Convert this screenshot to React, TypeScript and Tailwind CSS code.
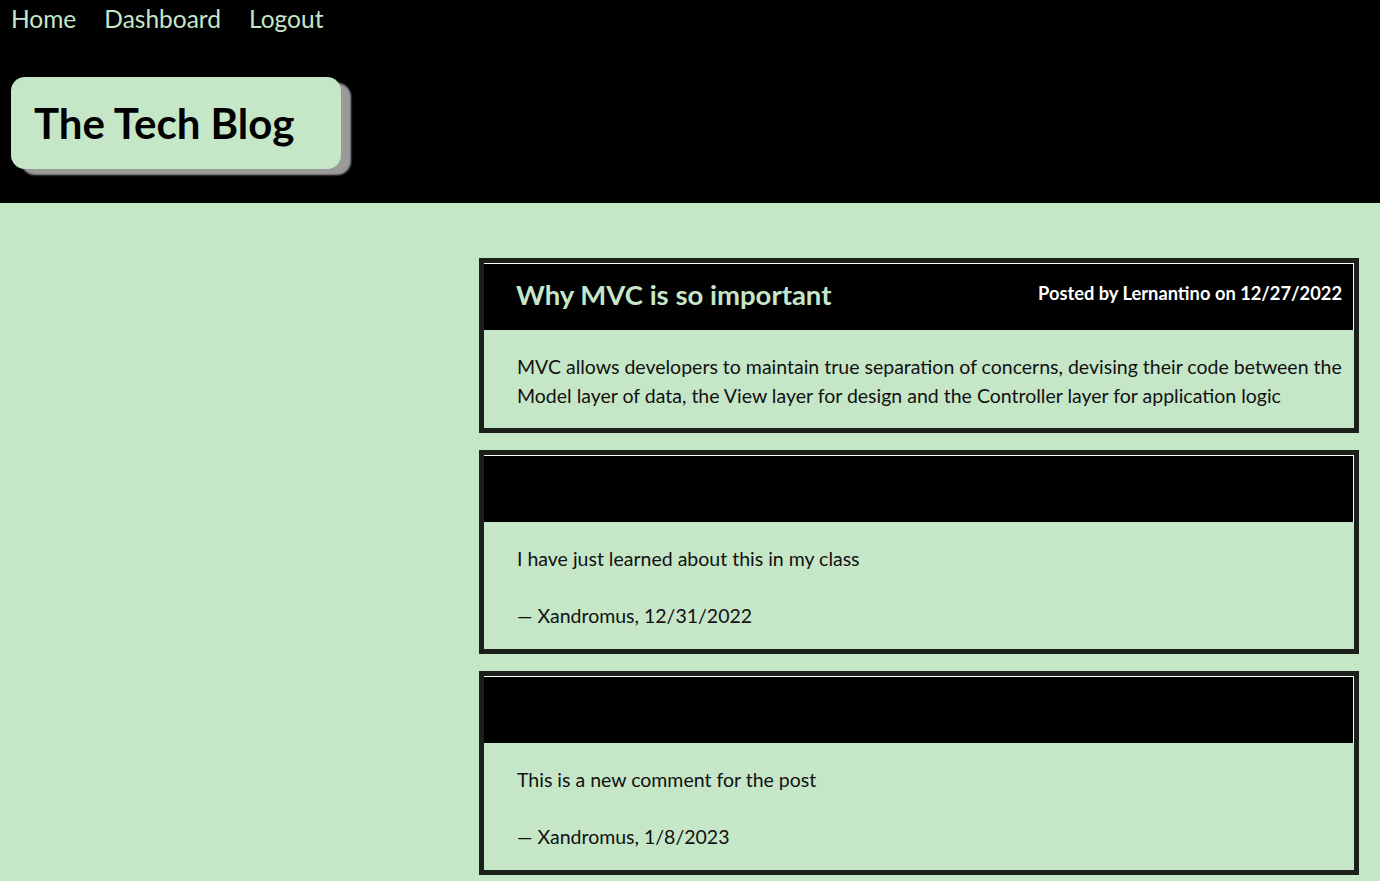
import React from "react";

const font = { fontFamily: '"Lato", "Noto Sans", sans-serif' };

function Card({
  title,
  meta,
  pb,
  children,
}: {
  title?: string;
  meta?: string;
  pb: string;
  children: React.ReactNode;
}) {
  return (
    <div className="w-[880px] border-[5px] border-[#1b201b] bg-[#c6e6c8]">
      <div className="h-[67px] bg-black border-t border-r border-white flex items-center justify-between pl-[32px] pr-[11px]">
        <h2 className="text-[27.5px] font-bold text-[#c6e6c8] leading-none -mt-[4px]">{title}</h2>
        <div className="text-[18.3px] font-bold text-white leading-none -mt-[8px]">{meta}</div>
      </div>
      <div className={`pl-[33px] pr-[10px] pt-[22px] ${pb} text-[19.5px] leading-[29px] text-[#111]`}>
        {children}
      </div>
    </div>
  );
}

export default function App() {
  return (
    <div className="min-h-[881px] bg-[#c6e6c8]" style={font}>
      <header className="bg-black h-[203px] px-[11px] flex flex-col">
        <nav className="flex gap-[28px] text-[24.5px] text-[#c6e6c8] leading-none pt-[7px]">
          <a>Home</a>
          <a>Dashboard</a>
          <a>Logout</a>
        </nav>
        <div className="mt-[45px] w-[330px] h-[92px] rounded-[14px] bg-[#c6e6c8] shadow-[10px_6px_2px_#9a9a9a] flex items-center pl-[23px]">
          <h1 className="text-[42px] font-bold text-black leading-none">The Tech Blog</h1>
        </div>
      </header>
      <main className="flex flex-col items-end pr-[21px] pt-[55px] gap-[17px] pb-[6px]">
        <Card title="Why MVC is so important" meta="Posted by Lernantino on 12/27/2022" pb="pb-[18px]">
          <p>
            MVC allows developers to maintain true separation of concerns, devising their code between the Model
            layer of data, the View layer for design and the Controller layer for application logic
          </p>
        </Card>
        <Card pb="pb-[19px]">
          <p>I have just learned about this in my class</p>
          <p className="mt-[28px]">— Xandromus, 12/31/2022</p>
        </Card>
        <Card pb="pb-[19px]">
          <p>This is a new comment for the post</p>
          <p className="mt-[28px]">— Xandromus, 1/8/2023</p>
        </Card>
      </main>
    </div>
  );
}
